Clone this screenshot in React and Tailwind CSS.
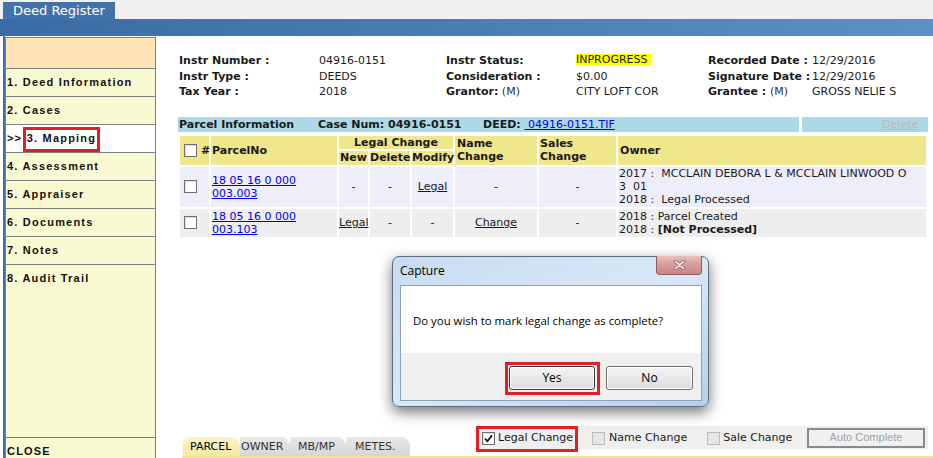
import React from "react";

function Check({ checked = false, disabled = false }) {
  return (
    <span
      className={
        disabled
          ? "inline-flex h-[13px] w-[13px] shrink-0 items-center justify-center border border-[#bcbcbc] bg-[#e6e6e6]"
          : "inline-flex h-[13px] w-[13px] shrink-0 items-center justify-center border border-[#6f6f6f] bg-white shadow-[inset_1px_1px_1px_rgba(0,0,0,0.12)]"
      }
    >
      {checked && (
        <svg width="9" height="9" viewBox="0 0 9 9">
          <path d="M1 4.6 L3.4 7.2 L8 1.4" fill="none" stroke="#111" strokeWidth="1.7" />
        </svg>
      )}
    </span>
  );
}

function SideItem({ children }) {
  return (
    <div className="flex h-[28px] shrink-0 items-center border-t border-[#808080] bg-[#fafad2] pl-[1px]">
      {children}
    </div>
  );
}

export default function App() {
  const hd = "bg-[#f0e68c] p-0 font-bold";
  return (
    <div className="relative h-[458px] w-[933px] overflow-hidden bg-white font-['DejaVu_Sans',Verdana,sans-serif] text-[11px] text-[#1a1a1a]">
      {/* top header */}
      <div className="flex h-[19px] items-end bg-[#f0f0f0] pl-[3px]">
        <div className="h-[17px] w-[112px] bg-[#4372a9] pl-[10px] text-[13px] leading-[18px] text-white">
          Deed Register
        </div>
      </div>
      <div className="h-[17px] bg-linear-to-r from-[#3b6ba4] to-[#5c90c6]" />

      <div className="flex h-[422px] overflow-hidden">
        <div className="ml-[3px] w-[2px] shrink-0 bg-[#3f6fa6]" />

        {/* sidebar */}
        <aside className="mt-[1px] flex w-[151px] shrink-0 flex-col self-start border border-[#808080] font-['Liberation_Sans',Arial,sans-serif] text-[11px] font-bold leading-[13px] tracking-[1.2px] text-[#111]">
          <div className="h-[30px] shrink-0 bg-[#ffe4b5]" />
          <SideItem>1. Deed Information</SideItem>
          <SideItem>2. Cases</SideItem>
          <div className="flex h-[28px] shrink-0 items-start border-t border-[#808080] bg-white pl-[1px]">
            <span className="mt-[7px]">&gt;&gt;</span>
            <span className="ml-[0.5px] mt-[2px] flex h-[25px] items-center border-[3px] border-[#e31e24] px-[1px] pb-[3px]">
              3. Mapping
            </span>
          </div>
          <SideItem>4. Assessment</SideItem>
          <SideItem>5. Appraiser</SideItem>
          <SideItem>6. Documents</SideItem>
          <SideItem>7. Notes</SideItem>
          <div className="flex h-[173px] shrink-0 items-start border-t border-[#808080] bg-[#fafad2] pl-[1px] pt-[7px]">
            8. Audit Trail
          </div>
          <SideItem>CLOSE</SideItem>
        </aside>

        {/* main */}
        <main className="flex h-full min-w-0 flex-1 flex-col pl-[22px]">
          <div className="grid grid-cols-[140px_127px_130px_132px_104px_auto] pl-[1px] pt-[17px] leading-[15.5px]">
            <div className="font-bold">Instr Number :</div>
            <div>04916-0151</div>
            <div className="font-bold">Instr Status:</div>
            <div>
              <span className="inline-block h-[11px] bg-[#ffff00] pr-[3px] align-[1px] leading-[11px]">INPROGRESS</span>
            </div>
            <div className="font-bold">Recorded Date :</div>
            <div>12/29/2016</div>

            <div className="font-bold">Instr Type :</div>
            <div>DEEDS</div>
            <div className="font-bold">Consideration :</div>
            <div>$0.00</div>
            <div className="font-bold">Signature Date :</div>
            <div>12/29/2016</div>

            <div className="font-bold">Tax Year :</div>
            <div>2018</div>
            <div>
              <span className="font-bold">Grantor:</span> <span className="text-[#2b2b55]">(M)</span>
            </div>
            <div>CITY LOFT COR</div>
            <div>
              <span className="font-bold">Grantee : </span>
              <span className="text-[#2b2b55]">(M)</span>
            </div>
            <div>GROSS NELIE S</div>
          </div>

          {/* parcel info bar */}
          <div className="mt-[17px] flex h-[15px] gap-[3px] leading-[15px]">
            <div className="w-[621px] whitespace-nowrap bg-[#add8e6] pl-[1px] font-bold">
              <span className="inline-block w-[139px]">Parcel Information</span>
              <span className="inline-block w-[165px]">Case Num: 04916-0151</span>
              <span>DEED:</span>{" "}
              <span className="font-normal text-[#0000ee] underline">&nbsp;04916-0151.TIF</span>
            </div>
            <div className="w-[126px] bg-[#add8e6] pr-[10px] text-right text-[#b9b9b9] underline">Delete</div>
          </div>

          {/* table */}
          <table className="mt-[2px] w-[750px] table-fixed border-separate border-spacing-[2px] leading-[13px]">
            <colgroup>
              <col className="w-[29px]" />
              <col className="w-[126px]" />
              <col className="w-[29px]" />
              <col className="w-[40px]" />
              <col className="w-[41px]" />
              <col className="w-[82px]" />
              <col className="w-[77px]" />
              <col />
            </colgroup>
            <thead>
              <tr className="h-[13px]">
                <th rowSpan={2} className={hd}>
                  <div className="flex items-center gap-[4px] pl-[4px]">
                    <Check />
                    <span>#</span>
                  </div>
                </th>
                <th rowSpan={2} className={hd + " pl-[1px] text-left"}>ParcelNo</th>
                <th colSpan={3} className={hd + " text-center"}>Legal Change</th>
                <th rowSpan={2} className={hd + " pl-[2px] text-left"}>Name<br />Change</th>
                <th rowSpan={2} className={hd + " pl-[1px] text-left"}>Sales<br />Change</th>
                <th rowSpan={2} className={hd + " pl-[2px] text-left"}>Owner</th>
              </tr>
              <tr className="h-[14px]">
                <th className={hd + " whitespace-nowrap text-center"}>New</th>
                <th className={hd + " whitespace-nowrap text-center"}>Delete</th>
                <th className={hd + " whitespace-nowrap text-center"}>Modify</th>
              </tr>
            </thead>
            <tbody>
              <tr className="h-[40px] bg-[#eeeefb]">
                <td className="p-0 pl-[4px]"><div className="flex"><Check /></div></td>
                <td className="p-0 pl-[1px] text-[#0000ee] underline">18 05 16 0 000<br />003.003</td>
                <td className="p-0 text-center">-</td>
                <td className="p-0 text-center">-</td>
                <td className="p-0 text-center underline">Legal</td>
                <td className="p-0 text-center">-</td>
                <td className="p-0 text-center">-</td>
                <td className="whitespace-pre p-0 pl-[1px] leading-[13.3px]">
                  {"2017 :  MCCLAIN DEBORA L & MCCLAIN LINWOOD O"}<br />{"3  01"}<br />{"2018 :  Legal Processed"}
                </td>
              </tr>
              <tr className="h-[28px] bg-[#eeeeee]">
                <td className="p-0 pl-[4px]"><div className="flex"><Check /></div></td>
                <td className="p-0 pl-[1px] text-[#0000ee] underline">18 05 16 0 000<br />003.103</td>
                <td className="p-0 text-center underline">Legal</td>
                <td className="p-0 text-center">-</td>
                <td className="p-0 text-center">-</td>
                <td className="p-0 text-center underline">Change</td>
                <td className="p-0 text-center">-</td>
                <td className="whitespace-pre p-0 pl-[1px]">
                  {"2018 : Parcel Created"}<br />{"2018 : "}<span className="font-bold">[Not Processed]</span>
                </td>
              </tr>
            </tbody>
          </table>

          {/* bottom */}
          <div className="mt-auto flex items-end">
            <div className="ml-[5px] flex h-[19px] shrink-0 leading-[19px]">
              <div className="w-[57px] rounded-tl-[7px] rounded-tr-[9px] bg-linear-to-b from-[#fbf4c6] to-[#f2e8a6] pl-[7px] text-black">PARCEL</div>
              <div className="w-[50px] rounded-tr-[9px] bg-linear-to-b from-[#e8e8e8] to-[#d6d6d6] pl-[1px] text-[#333]">OWNER</div>
              <div className="w-[56px] rounded-tr-[9px] bg-linear-to-b from-[#e8e8e8] to-[#d6d6d6] pl-[8px] text-[#333]">MB/MP</div>
              <div className="w-[64px] rounded-tr-[9px] bg-linear-to-b from-[#e8e8e8] to-[#d6d6d6] pl-[9px] text-[#3d3524]">METES.</div>
            </div>
            <div className="mb-[7px] ml-[66px] flex h-[23px] w-[452px] shrink-0 items-center whitespace-nowrap bg-[#efefef] pt-[2px]">
              <div className="flex h-[26px] shrink-0 items-center gap-[3px] border-[3px] border-[#e31e24] pl-[3px] pr-[2px]">
                <Check checked />
                <span>Legal Change</span>
              </div>
              <div className="ml-[14px] flex shrink-0 items-center gap-[4px]">
                <Check disabled />
                <span>Name Change</span>
              </div>
              <div className="ml-[20px] flex shrink-0 items-center gap-[3px]">
                <Check disabled />
                <span>Sale Change</span>
              </div>
              <div className="-mt-[2px] ml-auto mr-[3px] flex h-[20px] w-[118px] shrink-0 items-center justify-center border-2 border-[#8a8a8a] bg-[#f0f0f0] font-['Liberation_Sans',Arial,sans-serif] text-[11px] text-[#a3a3a3]">
                Auto Complete
              </div>
            </div>
          </div>
          <div className="ml-[4px] h-[2px] shrink-0 bg-[#f0e68c]" />
        </main>
      </div>

      {/* dialog */}
      <div className="absolute left-[392px] top-[256px] flex h-[151px] w-[317px] flex-col rounded-[7px] border border-[#5d6d7e] bg-linear-to-br from-[#c7dbf1] via-[#d9e8f7] to-[#b5cfea] font-['Open_Sans','Noto_Sans',sans-serif] text-black shadow-[0_5px_14px_rgba(0,0,0,0.55)]">
        <div className="flex h-[28px] shrink-0 items-start justify-between pl-[7px] pr-[6px]">
          <span className="mt-[5px] text-[12px] leading-[18px]">Capture</span>
          <div className="-mt-px flex h-[19px] w-[46px] items-center justify-center rounded-b-[4px] border border-t-0 border-[#8e5d5d] bg-linear-to-b from-[#e9c0c0] via-[#d69c9c] to-[#c98585]">
            <svg width="13" height="10" viewBox="0 0 13 10">
              <path d="M2.5 1.5 L10.5 8.5 M10.5 1.5 L2.5 8.5" stroke="#8d5c5c" strokeWidth="3.6" strokeLinecap="round" />
              <path d="M2.5 1.5 L10.5 8.5 M10.5 1.5 L2.5 8.5" stroke="#f6e4e4" strokeWidth="2" strokeLinecap="round" />
            </svg>
          </div>
        </div>
        <div className="mb-[5px] ml-[7px] mr-[6px] flex flex-1 flex-col border border-[#8ba0b9]">
          <div className="h-[67px] shrink-0 bg-white pl-[12px] pt-[27px] text-[11.4px] leading-[16px]">
            Do you wish to mark legal change as complete?
          </div>
          <div className="flex flex-1 items-start justify-end gap-[11px] bg-[#f0f0f0] pr-[8px] pt-[13px]">
            <div className="relative">
              <div className="flex h-[24px] w-[86px] items-center justify-center rounded-[3px] border border-[#3a3a3a] bg-linear-to-b from-[#f4f4f4] to-[#dcdcdc] text-[12px] shadow-[inset_0_0_0_1px_#ffffff]">
                Yes
              </div>
              <div className="absolute -bottom-[5px] -left-[4px] -right-[5px] -top-[4px] border-[3px] border-[#e31e24]" />
            </div>
            <div className="flex h-[24px] w-[87px] items-center justify-center rounded-[3px] border border-[#707070] bg-linear-to-b from-[#f4f4f4] to-[#dcdcdc] text-[12px] shadow-[inset_0_0_0_1px_#ffffff]">
              No
            </div>
          </div>
        </div>
      </div>
    </div>
  );
}
